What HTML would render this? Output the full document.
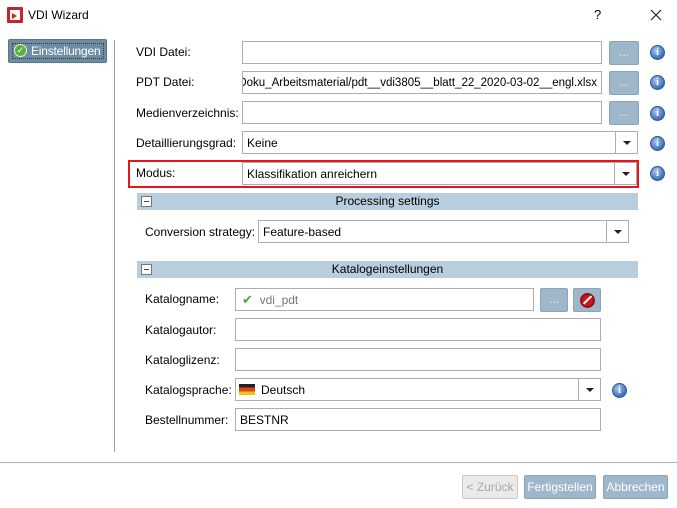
<!DOCTYPE html>
<html><head><meta charset="utf-8"><style>
*{box-sizing:border-box;margin:0;padding:0}
body{width:677px;height:508px;background:#fff;font-family:"Liberation Sans",sans-serif;font-size:12px;color:#000;position:relative;overflow:hidden}
.a{position:absolute}
.lbl{position:absolute;line-height:14px;white-space:nowrap}
.inp{position:absolute;border:1px solid #adadad;background:#fff;height:23px;line-height:22px;padding-left:4px;white-space:nowrap;overflow:hidden}
.btn{position:absolute;background:#9fb7cb;border:1px solid #8aa4ba;border-radius:2px;color:#e8eef3;text-align:center;line-height:20px;font-size:12px}
.info{position:absolute;width:15px;height:15px;border-radius:50%;background:radial-gradient(circle at 40% 35%,#a8c8ee,#3d6fb5 70%);border:1px solid #2f5a9a;color:#fff;font:bold 10px/13px "Liberation Serif",serif;text-align:center}
.dd{position:absolute;right:0;top:0;bottom:0;width:22px;border-left:1px solid #adadad}
.dd:after{content:"";position:absolute;left:7px;top:9px;border-left:4px solid transparent;border-right:4px solid transparent;border-top:4px solid #222}
.hdr{position:absolute;background:#b8cddd;height:17px;line-height:17px;text-align:center;font-size:12px}
.hdr i{position:absolute;left:4px;top:3px;width:11px;height:11px;border:1px solid #777;background:#fff}
.hdr i:after{content:"";position:absolute;left:2px;top:4px;width:5px;height:1px;background:#444}
.fb{position:absolute;height:24px;line-height:22px;border-radius:2px;text-align:center;font-size:12px}
</style></head><body>
<div class="a" style="left:7px;top:7px;width:16px;height:16px;background:#c8252b;border-radius:1px"><div class="a" style="left:3px;top:3px;width:10px;height:10px;background:#fff"></div><div class="a" style="left:5px;top:6px;width:0;height:0;border-top:3px solid transparent;border-bottom:3px solid transparent;border-left:5px solid #c8252b"></div></div>
<div class="lbl" style="left:28px;top:8px;font-size:12px">VDI Wizard</div>
<div class="lbl" style="left:594px;top:8px;font-size:13px">?</div>
<svg class="a" style="left:650px;top:9px" width="12" height="12"><path d="M1 1L11 11M11 1L1 11" stroke="#222" stroke-width="1.2"/></svg>

<div class="a" style="left:8px;top:39px;width:99px;height:24px;background:#6d8ca4;border-radius:2px;border:1px solid #587690"></div>
<div class="a" style="left:12px;top:43px;width:92px;height:16px;border:1px dotted #3a3a2a"></div>
<div class="a" style="left:14px;top:44px;width:13px;height:13px;border-radius:50%;background:#5cb040;border:1px solid #e6f4d8;color:#fff;font-size:9px;line-height:11px;text-align:center">✓</div>
<div class="lbl" style="left:31px;top:44px;color:#fff;font-size:12px;letter-spacing:-0.2px">Einstellungen</div>
<div class="a" style="left:114px;top:40px;width:1px;height:412px;background:#a0a0a0"></div>

<div class="lbl" style="left:136px;top:45px">VDI Datei:</div>
<div class="inp" style="left:242px;top:41px;width:360px"></div>
<div class="btn" style="left:609px;top:41px;width:30px;height:24px">...</div>
<div class="info" style="left:650px;top:45px">i</div>

<div class="lbl" style="left:136px;top:75px">PDT Datei:</div>
<div class="inp" style="left:242px;top:71px;width:360px;display:flex;justify-content:flex-end;padding-right:4px;font-size:11.5px"><span>Doku_Arbeitsmaterial/pdt__vdi3805__blatt_22_2020-03-02__engl.xlsx</span></div>
<div class="btn" style="left:609px;top:71px;width:30px;height:24px">...</div>
<div class="info" style="left:650px;top:75px">i</div>

<div class="lbl" style="left:136px;top:106px">Medienverzeichnis:</div>
<div class="inp" style="left:242px;top:101px;width:360px"></div>
<div class="btn" style="left:609px;top:101px;width:30px;height:24px">...</div>
<div class="info" style="left:650px;top:106px">i</div>

<div class="lbl" style="left:136px;top:136px">Detaillierungsgrad:</div>
<div class="inp" style="left:242px;top:131px;width:396px">Keine<div class="dd"></div></div>
<div class="info" style="left:650px;top:136px">i</div>

<div class="a" style="left:128px;top:160px;width:511px;height:28px;border:2px solid #e8141b"></div>
<div class="lbl" style="left:136px;top:166px">Modus:</div>
<div class="inp" style="left:242px;top:162px;width:395px">Klassifikation anreichern<div class="dd"></div></div>
<div class="info" style="left:650px;top:166px">i</div>

<div class="hdr" style="left:137px;top:193px;width:501px"><i></i>Processing settings</div>
<div class="lbl" style="left:145px;top:225px">Conversion strategy:</div>
<div class="inp" style="left:258px;top:220px;width:371px">Feature-based<div class="dd"></div></div>

<div class="hdr" style="left:137px;top:261px;width:501px"><i></i>Katalogeinstellungen</div>

<div class="lbl" style="left:145px;top:292px">Katalogname:</div>
<div class="inp" style="left:235px;top:288px;width:299px;color:#777;padding-left:6px"><span style="color:#4aa53a;font-size:13px">✔</span>&nbsp; vdi_pdt</div>
<div class="btn" style="left:540px;top:288px;width:28px;height:24px">...</div>
<div class="btn" style="left:573px;top:288px;width:28px;height:24px"><div class="a" style="left:6px;top:4px;width:15px;height:15px;border-radius:50%;background:#d0141c;border:2px solid #901015"></div><div class="a" style="left:8px;top:10px;width:11px;height:2px;background:#fff;transform:rotate(-45deg)"></div></div>

<div class="lbl" style="left:145px;top:323px">Katalogautor:</div>
<div class="inp" style="left:235px;top:318px;width:366px"></div>
<div class="lbl" style="left:145px;top:353px">Kataloglizenz:</div>
<div class="inp" style="left:235px;top:348px;width:366px"></div>
<div class="lbl" style="left:145px;top:383px">Katalogsprache:</div>
<div class="inp" style="left:235px;top:378px;width:366px;padding-left:3px"><span style="display:inline-block;width:16px;height:11px;vertical-align:-1px;background:linear-gradient(#222 33%,#d42 33% 66%,#f2c20e 66%);margin-right:6px"></span>Deutsch<div class="dd"></div></div>
<div class="info" style="left:612px;top:383px">i</div>
<div class="lbl" style="left:145px;top:413px">Bestellnummer:</div>
<div class="inp" style="left:235px;top:408px;width:366px">BESTNR</div>

<div class="a" style="left:0;top:462px;width:677px;height:1px;background:#b0b0b0"></div>
<div class="fb" style="left:462px;top:475px;width:56px;background:#eaeaea;border:1px solid #c8c8c8;color:#a8a8a8">&lt; Zurück</div>
<div class="fb" style="left:524px;top:475px;width:72px;background:#9fb7cb;border:1px solid #8aa4ba;color:#fff">Fertigstellen</div>
<div class="fb" style="left:603px;top:475px;width:65px;background:#9fb7cb;border:1px solid #8aa4ba;color:#fff">Abbrechen</div>
</body></html>
